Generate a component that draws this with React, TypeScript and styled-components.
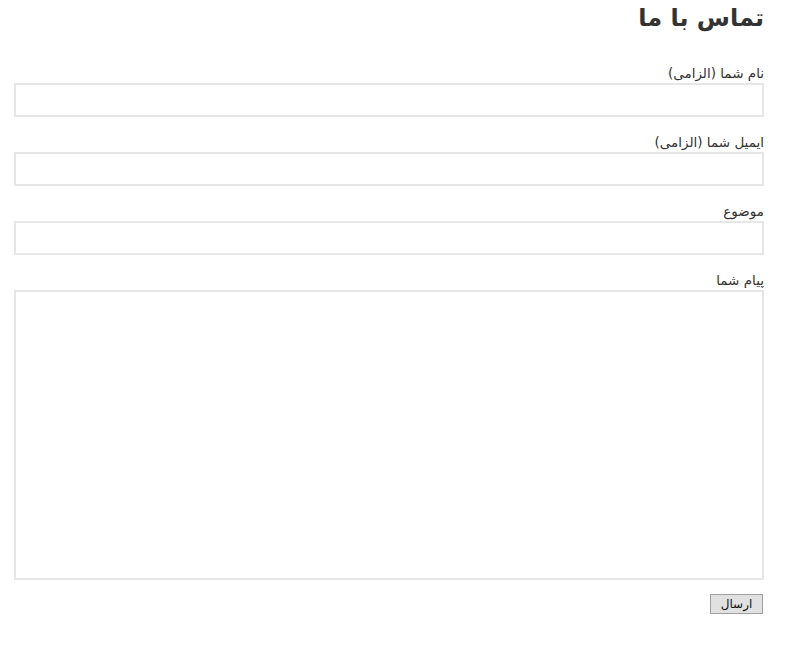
import React from 'react';
import styled, { createGlobalStyle } from 'styled-components';

const GlobalStyle = createGlobalStyle`
  html, body {
    margin: 0;
    padding: 0;
    background: #ffffff;
  }
  body {
    font-family: "DejaVu Sans", "Noto Sans", sans-serif;
  }
`;

const Page = styled.div`
  direction: rtl;
  padding: 0 22px 40px 14px;
`;

const Title = styled.h1`
  margin: 0 0 31px 0;
  padding-top: 3px;
  font-size: 24px;
  line-height: 30px;
  font-weight: bold;
  color: #333333;
`;

const Field = styled.div<{ $gap?: number }>`
  margin-bottom: ${(p) => p.$gap ?? 16}px;
`;

const Label = styled.label`
  display: block;
  font-size: 13.5px;
  line-height: 18px;
  color: #333333;
  margin-bottom: 1px;
`;

const TextInput = styled.input`
  display: block;
  box-sizing: border-box;
  width: 100%;
  height: 34px;
  margin: 0;
  border: 2px solid #e6e6e6;
  background: #ffffff;
  outline: none;
  font-family: inherit;
`;

const TextArea = styled.textarea`
  display: block;
  box-sizing: border-box;
  width: 100%;
  height: 290px;
  margin: 0;
  border: 2px solid #e6e6e6;
  background: #ffffff;
  resize: none;
  outline: none;
  font-family: inherit;
`;

const SubmitButton = styled.button`
  display: block;
  box-sizing: border-box;
  width: 53px;
  height: 20px;
  padding: 0;
  margin: 0 1px 0 0;
  border: 1px solid #a0a0a0;
  background: #e1e1e1;
  color: #111111;
  font-family: "DejaVu Sans", sans-serif;
  font-size: 12px;
  line-height: 18px;
`;

export default function App() {
  return (
    <Page>
      <GlobalStyle />
      <Title>تماس با ما</Title>
      <Field>
        <Label>نام شما (الزامی)</Label>
        <TextInput type="text" />
      </Field>
      <Field>
        <Label>ایمیل شما (الزامی)</Label>
        <TextInput type="email" />
      </Field>
      <Field>
        <Label>موضوع</Label>
        <TextInput type="text" />
      </Field>
      <Field $gap={14}>
        <Label>پیام شما</Label>
        <TextArea />
      </Field>
      <SubmitButton type="submit">ارسال</SubmitButton>
    </Page>
  );
}
